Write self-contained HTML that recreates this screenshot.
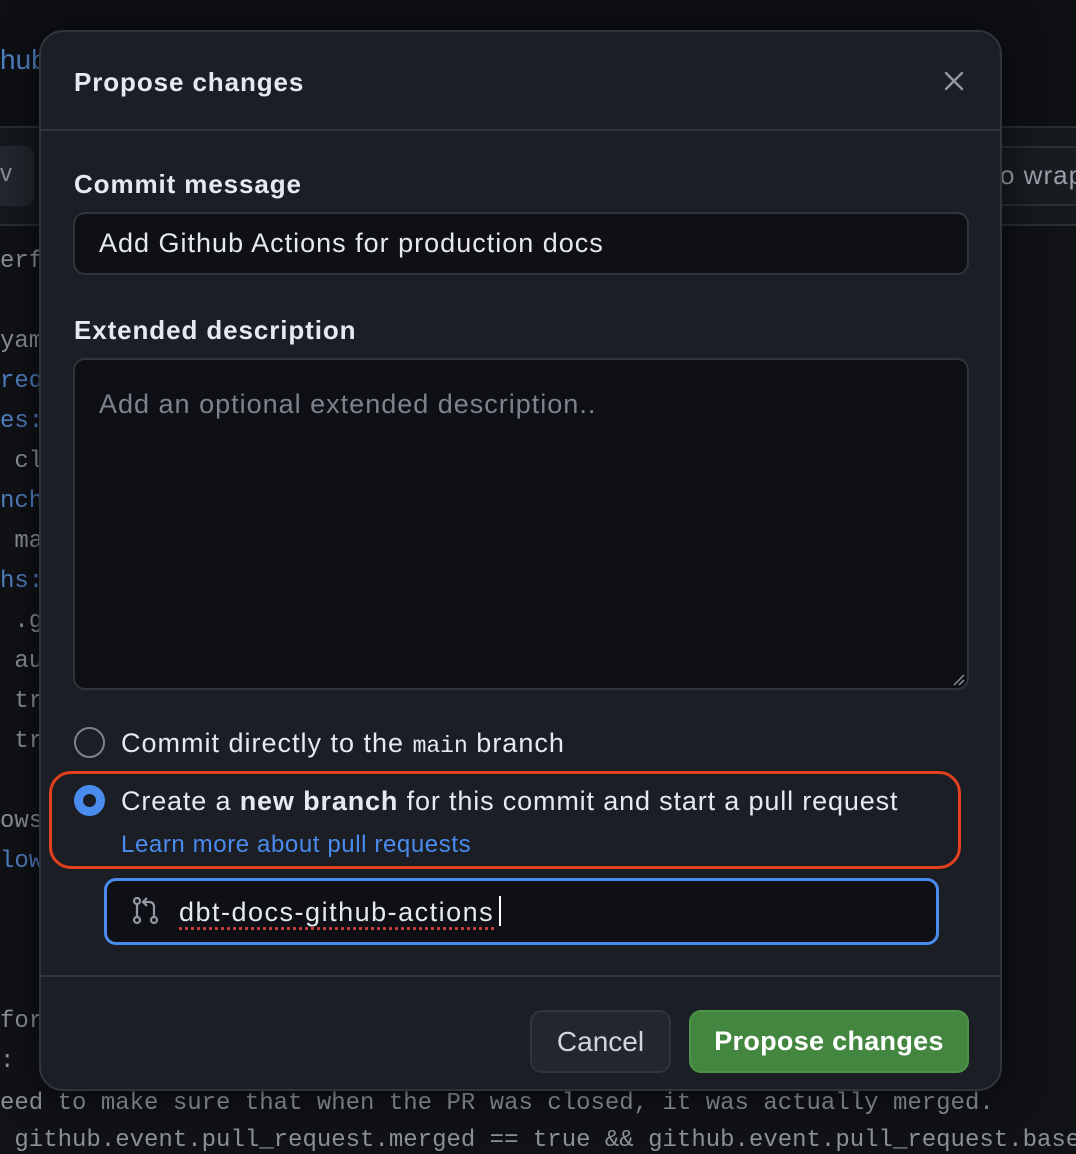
<!DOCTYPE html>
<html><head><style>
*{box-sizing:border-box;margin:0;padding:0}
body{width:1076px;height:1148px;background:#101216;position:relative;overflow:hidden;font-family:"Liberation Sans",sans-serif;color:#e6e9ef}
.hdr{position:absolute;left:0;top:0;width:1076px;height:126px;background:#0e1014}
.bar{position:absolute;left:0;top:126px;width:1076px;height:100px;background:#15181d;border-top:2px solid #2a2e35;border-bottom:2px solid #2a2e35}
.code{position:absolute;left:0;font-family:"Liberation Mono",monospace;font-size:24px;color:#8b9098;white-space:pre}
.b{color:#4f7fc0}
.modal{position:absolute;left:39px;top:30px;width:963px;height:1061px;background:#1b1e25;border:2px solid #30343b;border-radius:24px;box-shadow:0 0 40px rgba(0,0,0,.6)}
.t{position:absolute;font-weight:bold;font-size:26px;letter-spacing:0.9px;color:#e6e9ef}
.inp{position:absolute;background:#0e1015;border:2px solid #30343b;border-radius:12px}
.line{position:absolute;left:0;width:100%;height:2px;background:#30343b}
.txt{position:absolute;font-size:27px;letter-spacing:1px;color:#e6e9ef;white-space:nowrap}
</style></head><body>
<div class="hdr"></div>
<div style="position:absolute;left:0;top:44px;font-size:28px;color:#4f7fc0">hub</div>
<div class="bar"></div>
<div style="position:absolute;left:-10px;top:146px;width:44px;height:60px;background:#22262d;border-radius:10px"></div>
<div style="position:absolute;left:0;top:160px;font-size:24px;color:#8b9098">v</div>
<div style="position:absolute;left:990px;top:146px;width:100px;height:60px;background:#181b20;border:2px solid #2a2e35;border-radius:8px 0 0 8px"></div>
<div style="position:absolute;left:1000px;top:160px;font-size:26px;letter-spacing:1px;color:#9aa0a8;white-space:nowrap">o wrap</div>
<div class="code" style="top:248px">erf</div>
<div class="code" style="top:328px">yam</div>
<div class="code b" style="top:368px">req</div>
<div class="code b" style="top:408px">es:</div>
<div class="code" style="top:448px"> cl</div>
<div class="code b" style="top:488px">nch</div>
<div class="code" style="top:528px"> ma</div>
<div class="code b" style="top:568px">hs:</div>
<div class="code" style="top:608px"> .g</div>
<div class="code" style="top:648px"> au</div>
<div class="code" style="top:688px"> tr</div>
<div class="code" style="top:728px"> tr</div>
<div class="code" style="top:808px">ows</div>
<div class="code b" style="top:848px">low</div>
<div class="code" style="top:1008px">for</div>
<div class="code" style="top:1048px">:</div>
<div class="code" style="top:1090px">eed to make sure that when the PR was closed, it was actually merged.</div>
<div class="code" style="top:1127px"> github.event.pull_request.merged == true &amp;&amp; github.event.pull_request.base</div>

<div class="modal">
 <div class="t" style="left:33px;top:35px">Propose changes</div>
 <svg style="position:absolute;left:902px;top:38px" width="22" height="22" viewBox="0 0 22 22"><path d="M3 3L19 19M19 3L3 19" stroke="#9198a1" stroke-width="2.4" stroke-linecap="round"/></svg>
 <div class="line" style="top:97px"></div>
 <div class="t" style="left:33px;top:137px">Commit message</div>
 <div class="inp" style="left:32px;top:180px;width:896px;height:63px"></div>
 <div class="txt" style="left:58px;top:196px">Add Github Actions for production docs</div>
 <div class="t" style="left:33px;top:283px">Extended description</div>
 <div class="inp" style="left:32px;top:326px;width:896px;height:332px"></div>
 <div class="txt" style="left:58px;top:357px;color:#7d838c">Add an optional extended description..</div>
 <svg style="position:absolute;left:910px;top:640px" width="14" height="14"><path d="M13 3L3 13M13 8L8 13" stroke="#8b9098" stroke-width="1.5"/></svg>
 <div style="position:absolute;left:33px;top:695px;width:31px;height:31px;border:2px solid #7d838c;border-radius:50%"></div>
 <div class="txt" style="left:80px;top:696px">Commit directly to the <span style="font-family:'Liberation Mono',monospace;font-size:23px;letter-spacing:0">main</span> branch</div>
 <div style="position:absolute;left:8px;top:739px;width:912px;height:98px;border:3px solid #e2401e;border-radius:22px"></div>
 <div style="position:absolute;left:33px;top:753px;width:31px;height:31px;border:9px solid #4a8bee;border-radius:50%;background:#1b1e25"></div>
 <div class="txt" style="left:80px;top:754px;letter-spacing:0.85px">Create a <b>new branch</b> for this commit and start a pull request</div>
 <div class="txt" style="left:80px;top:799px;font-size:24px;letter-spacing:0.6px;color:#4a8bee">Learn more about pull requests</div>
 <div class="inp" style="left:63px;top:846px;width:835px;height:67px;border:3px solid #4a8bee"></div>
 <svg style="position:absolute;left:90px;top:864px" width="30" height="30" viewBox="0 0 30 30" fill="none" stroke="#9198a1" stroke-width="2.2"><circle cx="6" cy="5" r="3"/><circle cx="6" cy="24" r="3"/><circle cx="23" cy="24" r="3"/><path d="M6 8V21M23 21V11Q23 6 18 6H13M16 2L12 6L16 10"/></svg>
 <div class="txt" style="left:138px;top:865px;letter-spacing:1.5px;text-decoration:underline dotted #d0453a;text-underline-offset:6px">dbt-docs-github-actions</div>
 <div style="position:absolute;left:458px;top:864px;width:2px;height:30px;background:#fff"></div>
 <div class="line" style="top:943px"></div>
 <div style="position:absolute;left:489px;top:978px;width:141px;height:63px;background:#22262e;border:2px solid #30343b;border-radius:12px;font-size:28px;color:#d0d5dc;text-align:center;line-height:59px">Cancel</div>
 <div style="position:absolute;left:648px;top:978px;width:280px;height:63px;background:#438640;border:2px solid #4c9447;border-radius:12px;font-size:27px;letter-spacing:0.3px;font-weight:bold;color:#fff;text-align:center;line-height:59px">Propose changes</div>
</div>
</body></html>
